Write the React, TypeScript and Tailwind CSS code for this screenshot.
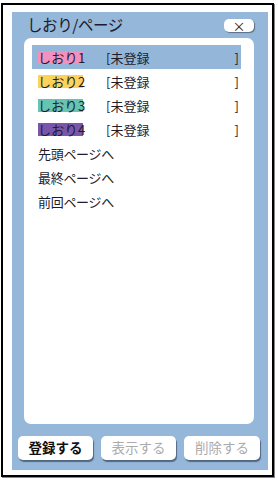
import React from "react";

const font = { fontFamily: '"Noto Sans CJK JP", "Noto Sans", sans-serif' };

const marks = [
  { label: "しおり1", bg: "bg-[#f290c0]" },
  { label: "しおり2", bg: "bg-[#fcd35a]" },
  { label: "しおり3", bg: "bg-[#66c4b2]" },
  { label: "しおり4", bg: "bg-[#7a56ab]" },
];

export default function App() {
  return (
    <div className="w-[278px] h-[480px] bg-white pl-[1px] pt-[3px]" style={font}>
      <div className="w-[273px] h-[474px] border-2 border-black pl-[9px] pt-[7px] pr-[3px] pb-[4px] shadow-[1px_1px_0_#888]">
        <div className="w-[256px] h-[458px] bg-[#94b7da] flex flex-col">
          <div className="h-[26px] flex items-center justify-between pl-[15px] pr-[14px]">
            <span className="text-[15.5px] tracking-[-0.4px] leading-none text-[#1c1c2c] whitespace-nowrap">しおり/ページ</span>
            <div className="w-[30px] h-[13px] bg-white rounded-[5px] shadow-[1px_1px_1px_#5d6d82] flex items-center justify-center text-[13px] leading-none text-[#222]">
              ×
            </div>
          </div>
          <div className="ml-[12px] w-[230px] h-[386px] bg-white rounded-[7px] pt-[7px] pl-[8px] pr-[13px] text-[13px] text-[#1c1c2c]">
            {marks.map((m, i) => (
              <div
                key={m.label}
                className={`h-[24px] flex items-center pl-[6px] pr-[2px] whitespace-nowrap ${i === 0 ? "bg-[#94b6d9]" : ""}`}
              >
                <span className={`${m.bg} h-[13px] leading-[13px] w-[45px] flex items-center tracking-[0.3px]`}>{m.label}</span>
                <span className="ml-[23px] leading-none">[未登録</span>
                <span className="ml-auto leading-none">]</span>
              </div>
            ))}
            {["先頭ページへ", "最終ページへ", "前回ページへ"].map((t) => (
              <div key={t} className="h-[24px] flex items-center pl-[6px] leading-none whitespace-nowrap tracking-[-0.3px]">
                {t}
              </div>
            ))}
          </div>
          <div className="mt-[12px] pl-[6px] flex gap-[8px]">
            <div className="w-[75px] h-[24px] bg-white rounded-[5px] shadow-[1px_2px_1px_rgba(40,50,70,0.6)] flex items-center justify-center text-[13.5px] font-bold text-[#111] leading-none whitespace-nowrap">
              登録する
            </div>
            <div className="w-[75px] h-[24px] bg-white rounded-[5px] shadow-[1px_2px_1px_rgba(40,50,70,0.6)] flex items-center justify-center text-[13.5px] text-[#aaaaaa] leading-none whitespace-nowrap">
              表示する
            </div>
            <div className="w-[76px] h-[24px] bg-white rounded-[5px] shadow-[1px_2px_1px_rgba(40,50,70,0.6)] flex items-center justify-center text-[13.5px] text-[#aaaaaa] leading-none whitespace-nowrap">
              削除する
            </div>
          </div>
        </div>
      </div>
    </div>
  );
}
